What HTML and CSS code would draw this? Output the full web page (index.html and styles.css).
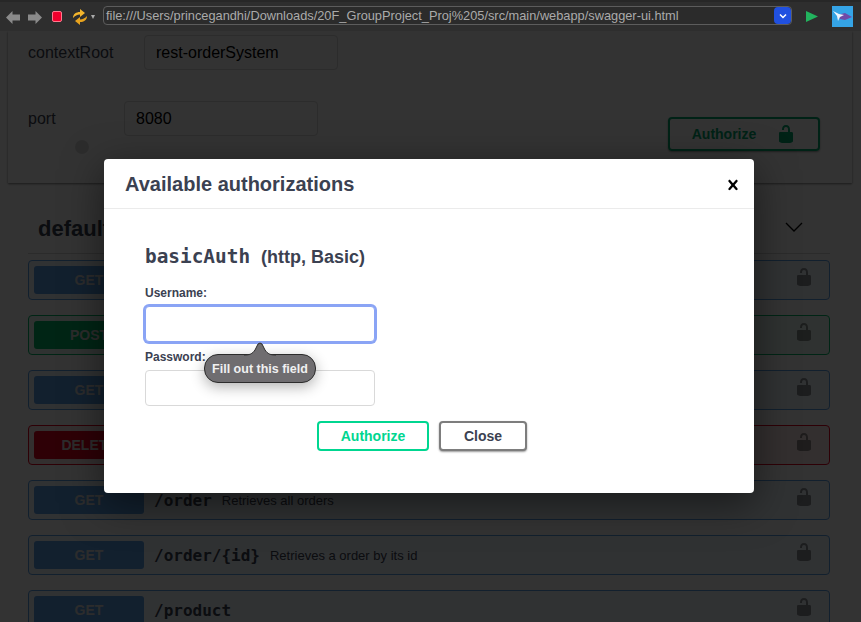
FILE: index.html
```html
<!DOCTYPE html>
<html lang="en">
<head>
    <meta charset="UTF-8">
    <title>Swagger UI</title>
    <link rel="stylesheet" href="styles.css">
</head>
<body>
    <svg class="svg-defs" width="0" height="0">
        <symbol id="lock" viewBox="0 0 20 20"><path d="M15.800 8H14V5.600C14 2.703 12.665 1 10 1 7.334 1 6 2.703 6 5.600V6h2v-.801C8 3.754 8.797 3 10 3c1.203 0 2 .754 2 2.199V8H4c-.553 0-1 .646-1 1.199V17c0 .549.428 1.139.951 1.307l1.197.387C5.672 18.861 6.550 19 7.100 19h5.800c.549 0 1.428-.139 1.951-.307l1.196-.387c.524-.167.953-.757.953-1.306V9.199C17 8.646 16.352 8 15.800 8z"/></symbol>
    </svg>

    <div class="toolbar">
        <svg class="arrow-icon" width="14" height="13" viewBox="0 0 14 13"><path d="M0 6.500L6.500 0v3.500H14v6H6.500V13z" fill="#8a8a8a"/></svg>
        <svg class="arrow-icon" width="14" height="13" viewBox="0 0 14 13"><path d="M14 6.500L7.500 0v3.500H0v6h7.500V13z" fill="#8a8a8a"/></svg>
        <span class="stop-btn"></span>
        <svg class="reload-icon" width="14" height="16" viewBox="0 0 14 16">
            <path d="M0 9C0 5 3 3 7 3V0l5 4-5 4V5.500C4 5.500 2 7 0 9z" fill="#f4b52c"/>
            <path d="M14 7c0 4-3 6-7 6v3l-5-4 5-4v2.500c3 0 5-1.500 7-3.500z" fill="#e8a31e"/>
        </svg>
        <span class="caret"></span>
        <div class="url-bar">
            <span class="url-text">file:///Users/princegandhi/Downloads/20F_GroupProject_Proj%205/src/main/webapp/swagger-ui.html</span>
            <span class="url-select">
                <svg width="8" height="6" viewBox="0 0 8 6"><path d="M1 1.500l3 3 3-3" fill="none" stroke="#fff" stroke-width="1.500"/></svg>
            </span>
        </div>
        <svg class="play-icon" width="12" height="11" viewBox="0 0 12 11"><path d="M0 0l12 5.500L0 11z" fill="#22b35e"/></svg>
        <svg class="avatar" width="21" height="21" viewBox="0 0 21 21">
            <rect width="21" height="21" fill="#35a4e6"/>
            <path d="M5 9l8-2 7 4-7 3-5-1z" fill="#6f4aa8"/>
            <path d="M1 5l6 3 5 1-4 2-2 4-1-5z" fill="#eef5ff"/>
        </svg>
    </div>

    <div class="page">
        <section class="scheme">
            <div class="server-field field-context">
                <label class="server-label">contextRoot</label>
                <input class="server-input" type="text" value="rest-orderSystem">
            </div>
            <div class="server-field field-port">
                <label class="server-label">port</label>
                <input class="server-input" type="text" value="8080">
            </div>
            <span class="server-dot"></span>
            <div class="auth-wrap">
                <button class="authorize-btn">
                    <span>Authorize</span>
                    <svg class="lock-green" width="20" height="20"><use href="#lock"/></svg>
                </button>
            </div>
        </section>

        <section class="ops">
            <div class="tag-head">
                <h2>default</h2>
                <svg width="20" height="20" viewBox="0 0 20 20"><path d="M2 6l8 8 8-8" fill="none" stroke="#000" stroke-width="1.300"/></svg>
            </div>

            <div class="op op-get"><span class="method">GET</span><svg class="lock" width="20" height="20"><use href="#lock"/></svg></div>
            <div class="op op-post"><span class="method">POST</span><svg class="lock" width="20" height="20"><use href="#lock"/></svg></div>
            <div class="op op-get"><span class="method">GET</span><svg class="lock" width="20" height="20"><use href="#lock"/></svg></div>
            <div class="op op-delete"><span class="method">DELETE</span><svg class="lock" width="20" height="20"><use href="#lock"/></svg></div>
            <div class="op op-get">
                <span class="method">GET</span>
                <span class="path">/order</span>
                <span class="summary">Retrieves all orders</span>
                <svg class="lock" width="20" height="20"><use href="#lock"/></svg>
            </div>
            <div class="op op-get">
                <span class="method">GET</span>
                <span class="path">/order/{id}</span>
                <span class="summary">Retrieves a order by its id</span>
                <svg class="lock" width="20" height="20"><use href="#lock"/></svg>
            </div>
            <div class="op op-get">
                <span class="method">GET</span>
                <span class="path">/product</span>
                <svg class="lock" width="20" height="20"><use href="#lock"/></svg>
            </div>
        </section>

        <div class="backdrop">
            <div class="modal">
                <div class="modal-head">
                    <h3>Available authorizations</h3>
                    <svg width="20" height="20" viewBox="0 0 20 20"><path d="M14.348 14.849c-.469.469-1.229.469-1.697 0L10 11.819l-2.651 3.029c-.469.469-1.229.469-1.697 0-.469-.469-.469-1.229 0-1.697l2.758-3.150-2.759-3.152c-.469-.469-.469-1.228 0-1.697.469-.469 1.228-.469 1.697 0L10 8.183l2.651-3.031c.469-.469 1.228-.469 1.697 0 .469.469.469 1.229 0 1.697l-2.758 3.152 2.758 3.150c.469.469.469 1.229 0 1.698z"/></svg>
                </div>
                <div class="modal-body">
                    <h4><code>basicAuth</code> (http, Basic)</h4>
                    <label class="auth-label">Username:</label>
                    <div class="input-wrap">
                        <input class="auth-input is-focus" type="text">
                        <div class="tip">
                            <svg class="tip-arrow" width="32" height="14" viewBox="0 0 32 14"><path d="M0 13C6 13 8 12 11 8L14 2Q16 0 18 2L21 8C24 12 26 13 32 13" fill="#6f6d70" stroke="#2c2c2c"/></svg>
                            Fill out this field
                        </div>
                    </div>
                    <label class="auth-label">Password:</label>
                    <input class="auth-input" type="password">
                    <div class="modal-actions">
                        <button class="btn btn-auth">Authorize</button>
                        <button class="btn btn-close">Close</button>
                    </div>
                </div>
            </div>
        </div>
    </div>
</body>
</html>
```

FILE: styles.css
```css
* {
    box-sizing: border-box;
}
body {
    margin: 0;
    height: 622px;
    overflow: hidden;
    font-family: "Liberation Sans", Arial, sans-serif;
    background-color: #fff;
    color: #3b4151;
}
.svg-defs {
    display: block;
    height: 0;
}

/* browser toolbar */
.toolbar {
    height: 31px;
    display: flex;
    align-items: center;
    padding-left: 6px;
    background-color: #2e2e2e;
    border-top: 2px solid #272727;
}
.arrow-icon {
    margin-top: 1px;
}
.arrow-icon + .arrow-icon {
    margin-left: 8px;
}
.stop-btn {
    width: 10px;
    height: 11px;
    margin-left: 10px;
    background-color: #f0002c;
    border: 1px solid #ff7b8f;
    border-radius: 2px;
}
.reload-icon {
    margin-left: 11px;
}
.caret {
    width: 0;
    height: 0;
    margin-left: 4px;
    border-left: 2.500px solid transparent;
    border-right: 2.500px solid transparent;
    border-top: 4px solid #aaa;
}
.url-bar {
    width: 689px;
    height: 19px;
    margin: 0 0 2px 8px;
    display: flex;
    align-items: center;
    justify-content: space-between;
    padding: 0 0 0 2px;
    border: 1px solid #5c5c5c;
    border-radius: 4px;
    background-color: #2b2b2b;
}
.url-text {
    font-size: 12.800px;
    color: #aaa;
    white-space: nowrap;
}
.url-select {
    width: 17px;
    height: 17px;
    display: flex;
    align-items: center;
    justify-content: center;
    background-color: #2050e0;
    border-radius: 4px;
}
.play-icon {
    margin-left: 14px;
}
.avatar {
    margin-left: 14px;
}

/* page under the dialog */
.page {
    position: relative;
    height: 591px;
    overflow: hidden;
}
.scheme {
    position: relative;
    height: 152px;
    margin: 0 9px 0 8px;
    padding: 4px 20px 0;
    background-color: #fff;
    box-shadow: 0 1px 2px rgba(0, 0, 0, .5);
}
.server-field {
    display: flex;
    align-items: center;
    height: 35px;
}
.field-context {
    margin-bottom: 31px;
}
.server-label {
    font-size: 16px;
    color: #3b4151;
}
.field-context .server-label {
    width: 116px;
}
.field-port .server-label {
    width: 96px;
}
.server-input {
    width: 194px;
    height: 35px;
    padding: 0 11px;
    font: 16px "Liberation Sans", Arial, sans-serif;
    color: #000;
    background-color: #fff;
    border: 1px solid #d9d9d9;
    border-radius: 4px;
}
.server-dot {
    position: absolute;
    left: 67px;
    top: 109px;
    width: 14px;
    height: 14px;
    border-radius: 50%;
    background-color: #ddd;
}
.auth-wrap {
    display: flex;
    justify-content: flex-end;
    margin: -19px 12px 0 0;
}
.authorize-btn {
    width: 152px;
    height: 34px;
    display: flex;
    align-items: center;
    justify-content: center;
    gap: 20px;
    padding: 0;
    font: bold 14px "Liberation Sans", Arial, sans-serif;
    color: #00a870;
    background: transparent;
    border: 2px solid #00a870;
    border-radius: 4px;
    box-shadow: 0 1px 2px rgba(0, 0, 0, .4);
}
.lock-green {
    fill: #00a870;
}
.ops {
    padding: 0 31px 0 28px;
}
.tag-head {
    height: 71px;
    display: flex;
    align-items: center;
    justify-content: space-between;
    padding: 22px 26px 0 10px;
    border-bottom: 1px solid #d8d8d8;
}
.tag-head h2 {
    margin: 0;
    font-size: 22px;
    color: #3b4151;
}
.tag-head svg {
    margin-bottom: 5px;
}
.op {
    height: 40px;
    margin-top: 15px;
    display: flex;
    align-items: center;
    padding: 0 5px;
    border: 1px solid;
    border-radius: 4px;
}
.tag-head + .op {
    margin-top: 6px;
}
.op-get {
    border-color: #5a9fe6;
    background-color: rgba(97, 175, 254, .1);
}
.op-post {
    border-color: #00b868;
    background-color: rgba(73, 204, 144, .1);
}
.op-delete {
    border-color: #e6001e;
    background-color: rgba(249, 62, 62, .1);
}
.method {
    width: 110px;
    height: 28px;
    display: flex;
    align-items: center;
    justify-content: center;
    font-size: 14px;
    font-weight: bold;
    color: #ddd;
    border-radius: 3px;
}
.op-get .method {
    background-color: #5a9fe6;
}
.op-post .method {
    background-color: #00b868;
}
.op-delete .method {
    background-color: #e6001e;
}
.path {
    margin-left: 10px;
    font: bold 16px "DejaVu Sans Mono", monospace;
    color: #3b4151;
}
.summary {
    margin-left: 10px;
    font-size: 13px;
    color: #3b4151;
}
.lock {
    margin: 0 10px 6px auto;
    fill: #000;
    opacity: .4;
}

/* dialog */
.backdrop {
    position: absolute;
    top: 0;
    left: 0;
    right: 0;
    bottom: 0;
    padding: 128px 0 0 104px;
    background-color: rgba(0, 0, 0, .8);
}
.modal {
    width: 650px;
    height: 334px;
    background-color: #fff;
    border-radius: 4px;
    box-shadow: 0 10px 40px rgba(0, 0, 0, .5);
}
.modal-head {
    height: 50px;
    display: flex;
    align-items: center;
    justify-content: space-between;
    padding: 2px 11px 0 21px;
    border-bottom: 1px solid #ebebeb;
}
.modal-head h3 {
    margin: 0;
    font-size: 20px;
    color: #3b4151;
}
.modal-body {
    padding: 36px 41px 0;
}
.modal-body h4 {
    margin: 0 0 17px;
    font-size: 18px;
    line-height: 24px;
    color: #3b4151;
}
.modal-body code {
    margin-right: 6px;
    font: bold 19.400px "DejaVu Sans Mono", monospace;
}
.auth-label {
    display: block;
    height: 20px;
    font-size: 12px;
    font-weight: bold;
    line-height: 14px;
    color: #3b4151;
}
.input-wrap {
    position: relative;
    margin-bottom: 8px;
}
.auth-input {
    display: block;
    width: 230px;
    height: 36px;
    padding: 0 10px;
    background-color: #fff;
    border: 1px solid #d9d9d9;
    border-radius: 4px;
}
.auth-input.is-focus {
    border-color: #8aa4f5;
    box-shadow: 0 0 0 2px #8aa4f5;
}
.tip {
    position: absolute;
    left: 59px;
    top: 48px;
    width: 112px;
    height: 29px;
    display: flex;
    align-items: center;
    justify-content: center;
    font-size: 12.500px;
    font-weight: bold;
    color: #f0f0f0;
    background-color: #6f6d70;
    border: 1px solid #2c2c2c;
    border-radius: 14px;
    box-shadow: 0 4px 14px rgba(0, 0, 0, .3);
}
.tip-arrow {
    position: absolute;
    left: 39px;
    top: -13px;
}
.modal-actions {
    display: flex;
    justify-content: center;
    gap: 10px;
    margin-top: 15px;
    padding-right: 14px;
}
.btn {
    height: 30px;
    padding: 0;
    font: bold 14px "Liberation Sans", Arial, sans-serif;
    background-color: #fff;
    border-radius: 4px;
}
.btn-auth {
    width: 112px;
    color: #00d690;
    border: 2px solid #00d690;
}
.btn-close {
    width: 88px;
    color: #3b4151;
    border: 2px solid #7d7d7d;
    box-shadow: 0 1px 2px rgba(0, 0, 0, .4);
}
```
